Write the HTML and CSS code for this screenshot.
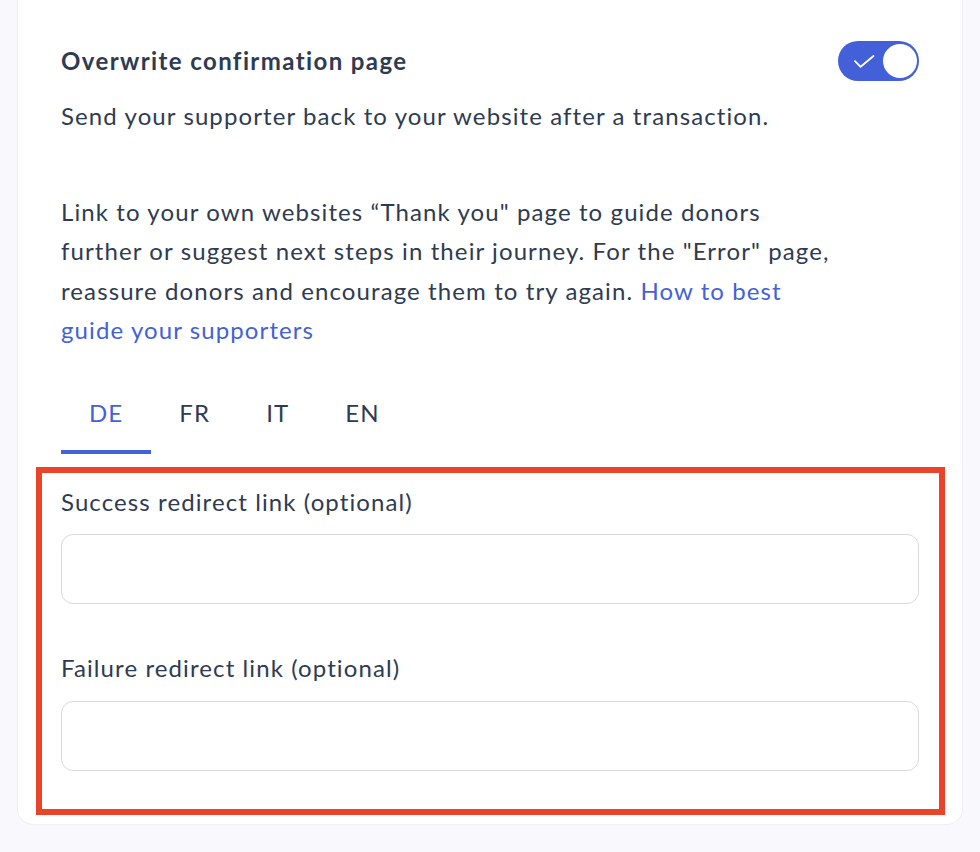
FILE: index.html
```html
<!DOCTYPE html>
<html lang="en">
<head>
<meta charset="utf-8">
<title>Overwrite confirmation page</title>
<link rel="stylesheet" href="styles.css">
</head>
<body>
<div class="page">
  <section class="card">
    <div class="header-row">
      <h2 class="title">Overwrite confirmation page</h2>
      <button class="toggle" aria-pressed="true">
        <svg class="check" width="21" height="13" viewBox="0 0 21 13"><path d="M1 6.2 L6.6 11.8 L19.5 1" fill="none" stroke="#fff" stroke-width="1.8" stroke-linecap="round" stroke-linejoin="round"/></svg>
        <span class="knob"></span>
      </button>
    </div>
    <p class="subtitle">Send your supporter back to your website after a transaction.</p>
    <p class="desc">Link to your own websites “Thank you" page to guide donors further or suggest next steps in their journey. For the "Error" page, reassure donors and encourage them to try again. <a href="#" class="link">How to best guide your supporters</a></p>
    <div class="tabs">
      <span class="tab active">DE</span>
      <span class="tab">FR</span>
      <span class="tab">IT</span>
      <span class="tab">EN</span>
    </div>
    <div class="highlight">
      <label class="field">
        <span class="label">Success redirect link (optional)</span>
        <input class="input" type="text">
      </label>
      <label class="field">
        <span class="label">Failure redirect link (optional)</span>
        <input class="input" type="text">
      </label>
    </div>
  </section>
</div>
</body>
</html>
```
FILE: styles.css
```css
* { box-sizing: border-box; }
html, body { margin: 0; padding: 0; }
body {
  background: #f8f8fd;
  font-family: "Lato", "Noto Sans", sans-serif;
  color: #2e3b51;
  font-size: 24px;
  line-height: 39.6px;
  letter-spacing: 1.1px;
}
.page {
  padding: 0 17px 27px;
}
.card {
  background: #fff;
  border: 1px solid #efeff8;
  border-top: none;
  border-radius: 0 0 16px 16px;
  padding: 41px 43px 9px 43px;
}
.header-row {
  display: flex;
  align-items: center;
  justify-content: space-between;
  height: 40px;
}
.title {
  margin: 0;
  font-size: 24px;
  font-weight: 700;
  line-height: 39.6px;
  letter-spacing: 1.4px;
}
.toggle {
  position: relative;
  width: 81px;
  height: 40px;
  border: none;
  border-radius: 20px;
  background: #4460d8;
  padding: 0;
  display: flex;
  align-items: center;
}
.check {
  margin-left: 16px;
}
.knob {
  position: absolute;
  right: 2px;
  top: 3px;
  width: 34px;
  height: 34px;
  border-radius: 50%;
  background: #fff;
}
.subtitle {
  margin: 15px 0 0;
}
.desc {
  margin: 56px 0 0;
  max-width: 770px;
}
.link {
  color: #4361d8;
  text-decoration: none;
}
.tabs {
  display: flex;
  margin-top: 43px;
}
.tab {
  padding: 0 28px 17px;
  border-bottom: 4px solid transparent;
  color: #2e3b51;
}
.tab.active {
  color: #4361d8;
  border-bottom-color: #4361d8;
}
.highlight {
  margin: 13px -26px 0 -25px;
  border: 6px solid #e9432a;
  padding: 9px 20px 38px 19px;
}
.field {
  display: flex;
  flex-direction: column;
}
.field + .field {
  margin-top: 44px;
}
.label {
  display: block;
}
.input {
  margin-top: 13px;
  height: 70px;
  width: 100%;
  border: 1px solid #dadada;
  border-radius: 12px;
  background: #fff;
  font: inherit;
  padding: 0 16px;
}
```
